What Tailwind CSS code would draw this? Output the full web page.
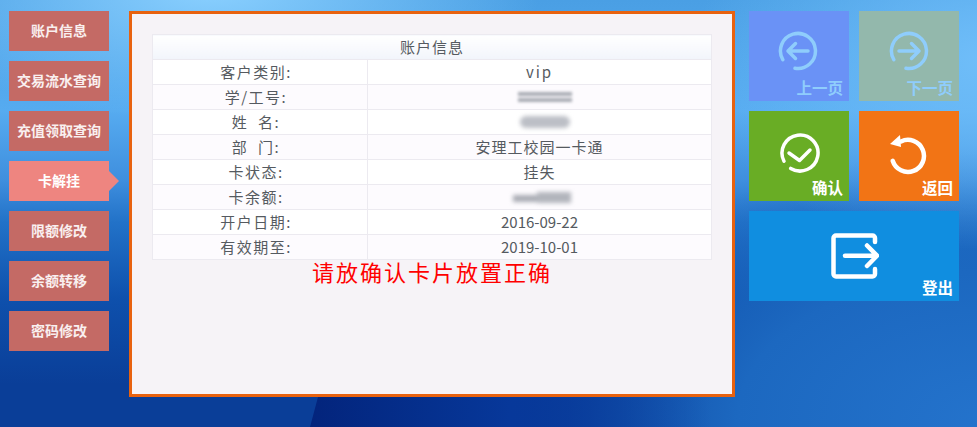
<!DOCTYPE html>
<html lang="zh-CN">
<head>
    <meta charset="UTF-8">
    <title>账户信息</title>
    <script src="https://cdn.jsdelivr.net/npm/@tailwindcss/browser@4"></script>
</head>
<body class="overflow-hidden font-['Noto_Sans_CJK_SC','Noto_Sans',sans-serif]">
<div class="relative w-[977px] h-[427px] overflow-hidden flex items-start pt-[11px] pl-[9px] bg-[radial-gradient(ellipse_330px_130px_at_210px_-10px,#8ad0ff_0%,rgba(125,200,255,0)_100%),radial-gradient(ellipse_300px_190px_at_990px_60px,#70bef9_0%,rgba(110,190,250,0)_100%),radial-gradient(ellipse_460px_270px_at_990px_420px,#2473cc_0%,#1c68c0_55%,rgba(30,105,195,0)_100%),linear-gradient(180deg,#4a9fe4_0%,#56abf0_26%,#3f8fde_42%,#2272c8_52%,#0e50ac_70%,#0a3e98_90%,#0a3e98_100%)]">

    <!-- dark wedge of the wallpaper under the panel -->
    <div class="absolute left-[310px] bottom-0 w-[400px] h-[30px] bg-gradient-to-r from-[#03247c] via-[#07389a] to-transparent [clip-path:polygon(8px_0,100%_0,100%_100%,0_100%)]"></div>

    <!-- left menu -->
    <div class="w-[100px] flex flex-col gap-[10px] text-[14px] font-bold text-white/90 shrink-0">
        <div class="h-[40px] pb-[2px] bg-[#c46a65] flex items-center justify-center">账户信息</div>
        <div class="h-[40px] pb-[2px] bg-[#c46a65] flex items-center justify-center">交易流水查询</div>
        <div class="h-[40px] pb-[2px] bg-[#c46a65] flex items-center justify-center">充值领取查询</div>
        <div class="relative h-[40px] pb-[2px] bg-[#ee8580] text-white flex items-center justify-center">卡解挂
            <span class="absolute left-full top-[10px] border-y-[10px] border-y-transparent border-l-[10px] border-l-[#ee8580]"></span>
        </div>
        <div class="h-[40px] pb-[2px] bg-[#c46a65] flex items-center justify-center">限额修改</div>
        <div class="h-[40px] pb-[2px] bg-[#c46a65] flex items-center justify-center">余额转移</div>
        <div class="h-[40px] pb-[2px] bg-[#c46a65] flex items-center justify-center">密码修改</div>
    </div>

    <!-- main panel -->
    <div class="relative ml-[20px] w-[606px] h-[386px] shrink-0 border-[3px] border-[#e8620f] bg-[#f6f3f7] pt-[20px] px-[20px]">
        <table class="w-[560px] table-fixed border-collapse text-[15px] leading-[24px] text-[#555a60] text-center">
            <colgroup>
                <col class="w-[215px]">
                <col>
            </colgroup>
            <thead>
                <tr class="h-[25px]">
                    <th colspan="2" class="font-normal tracking-[1px] border border-[#eceaf0] bg-gradient-to-b from-white to-[#f2f5fb]">账户信息</th>
                </tr>
            </thead>
            <tbody>
                <tr class="h-[25px] bg-white">
                    <td class="pr-[8px] tracking-[1.5px] border border-[#eceaf0]">客户类别:</td>
                    <td class="tracking-[2px] border border-[#eceaf0]">vip</td>
                </tr>
                <tr class="h-[25px] bg-[#fdfbfe]">
                    <td class="pr-[8px] tracking-[1.5px] border border-[#eceaf0]">学/工号:</td>
                    <td class="border border-[#eceaf0]">
                        <div class="ml-[150px] w-[54px] flex flex-col gap-[2px] blur-[1.5px]">
                            <div class="h-[4px] bg-[#a9acb4]"></div>
                            <div class="h-[4px] bg-[#a9acb4]"></div>
                        </div>
                    </td>
                </tr>
                <tr class="h-[25px] bg-white">
                    <td class="pr-[8px] tracking-[1.5px] border border-[#eceaf0]">姓&nbsp;&nbsp;名:</td>
                    <td class="border border-[#eceaf0]"><div class="ml-[152px] w-[50px] h-[12px] bg-[#bcbfc6] rounded-full blur-[2px]"></div></td>
                </tr>
                <tr class="h-[25px] bg-[#fdfbfe]">
                    <td class="pr-[8px] tracking-[1.5px] border border-[#eceaf0]">部&nbsp;&nbsp;门:</td>
                    <td class="tracking-[1px] border border-[#eceaf0]">安理工校园一卡通</td>
                </tr>
                <tr class="h-[25px] bg-white">
                    <td class="pr-[8px] tracking-[1.5px] border border-[#eceaf0]">卡状态:</td>
                    <td class="tracking-[1px] border border-[#eceaf0]">挂失</td>
                </tr>
                <tr class="h-[25px] bg-[#fdfbfe]">
                    <td class="pr-[8px] tracking-[1.5px] border border-[#eceaf0]">卡余额:</td>
                    <td class="border border-[#eceaf0]">
                        <div class="ml-[145px] w-[58px] flex blur-[2px]">
                            <div class="w-[24px] h-[7px] mt-[3px] bg-[#a9acb4]"></div>
                            <div class="w-[34px] h-[11px] bg-[#b2b5bc]"></div>
                        </div>
                    </td>
                </tr>
                <tr class="h-[25px] bg-white">
                    <td class="pr-[8px] tracking-[1.5px] border border-[#eceaf0]">开户日期:</td>
                    <td class="border border-[#eceaf0]">2016-09-22</td>
                </tr>
                <tr class="h-[25px] bg-[#fdfbfe]">
                    <td class="pr-[8px] tracking-[1.5px] border border-[#eceaf0]">有效期至:</td>
                    <td class="border border-[#eceaf0]">2019-10-01</td>
                </tr>
            </tbody>
        </table>
        <p class="w-[560px] text-center text-[22px] leading-[22px] tracking-[2px] text-[#ff0000]">请放确认卡片放置正确</p>
    </div>

    <!-- right tiles -->
    <div class="ml-[14px] w-[210px] grid grid-cols-2 gap-[10px] shrink-0 text-[15.5px] leading-[20px] font-bold text-white">
        <div class="relative h-[90px] bg-[#6a92f6] flex justify-center pt-[19px]">
            <svg class="w-[42px] h-[42px] -ml-[2px] text-[#8fcdfc]" viewBox="0 0 42 42" fill="none" stroke="currentColor" stroke-width="3.5" stroke-linecap="round" stroke-linejoin="round">
                <path d="M5.8 29.7A17.5 17.5 0 1 1 18 38.2"/>
                <path d="M31 21H11M18.5 13.5L11 21l7.500 7.500"/>
            </svg>
            <span class="absolute right-[6px] bottom-[4px] text-[#8fcdfc]">上一页</span>
        </div>
        <div class="relative h-[90px] bg-[#93b8ac] flex justify-center pt-[19px]">
            <svg class="w-[42px] h-[42px] text-[#8fcdfc]" viewBox="0 0 42 42" fill="none" stroke="currentColor" stroke-width="3.5" stroke-linecap="round" stroke-linejoin="round">
                <path d="M5.8 29.7A17.5 17.5 0 1 1 18 38.2"/>
                <path d="M11 21H31M23.5 13.5L31 21l-7.500 7.500"/>
            </svg>
            <span class="absolute right-[6px] bottom-[4px] text-[#8fcdfc]">下一页</span>
        </div>
        <div class="relative h-[90px] bg-[#69ad25] flex justify-center pt-[21px]">
            <svg class="w-[42px] h-[42px] ml-[2px]" viewBox="0 0 42 42" fill="none" stroke="white" stroke-width="3.5" stroke-linecap="round" stroke-linejoin="round">
                <path d="M5 29.2A18 18 0 1 1 11.7 36.4"/>
                <path d="M10 21l10.500 7.500 10.500-10.500"/>
            </svg>
            <span class="absolute right-[6px] bottom-[4px]">确认</span>
        </div>
        <div class="relative h-[90px] bg-[#f27415] flex justify-center pt-[25px]">
            <svg class="w-[40px] h-[40px] -ml-[2px] overflow-visible" viewBox="0 0 40 40" fill="none">
                <path d="M4.7 24.8A16 16 0 1 0 13 5.5" stroke="white" stroke-width="4.5" stroke-linecap="round"/>
                <path d="M2 8L12 -1L13 11Z" fill="white"/>
            </svg>
            <span class="absolute right-[6px] bottom-[4px]">返回</span>
        </div>
        <div class="relative col-span-2 h-[90px] bg-[#108ee0] flex justify-center pt-[21px]">
            <svg class="w-[50px] h-[48px]" viewBox="0 0 50 48" fill="none" stroke="white" stroke-width="4.5" stroke-linecap="round" stroke-linejoin="round">
                <path d="M46 10V6a2.500 2.500 0 0 0-2.500-2.500H7A2.500 2.500 0 0 0 4.500 6V42A2.500 2.500 0 0 0 7 44.500H43.500A2.500 2.500 0 0 0 46 42V37"/>
                <path d="M16 23.700H47M38 13.500l10 10.200-10 10.300"/>
            </svg>
            <span class="absolute right-[6px] bottom-[4px]">登出</span>
        </div>
    </div>
</div>
</body>
</html>
